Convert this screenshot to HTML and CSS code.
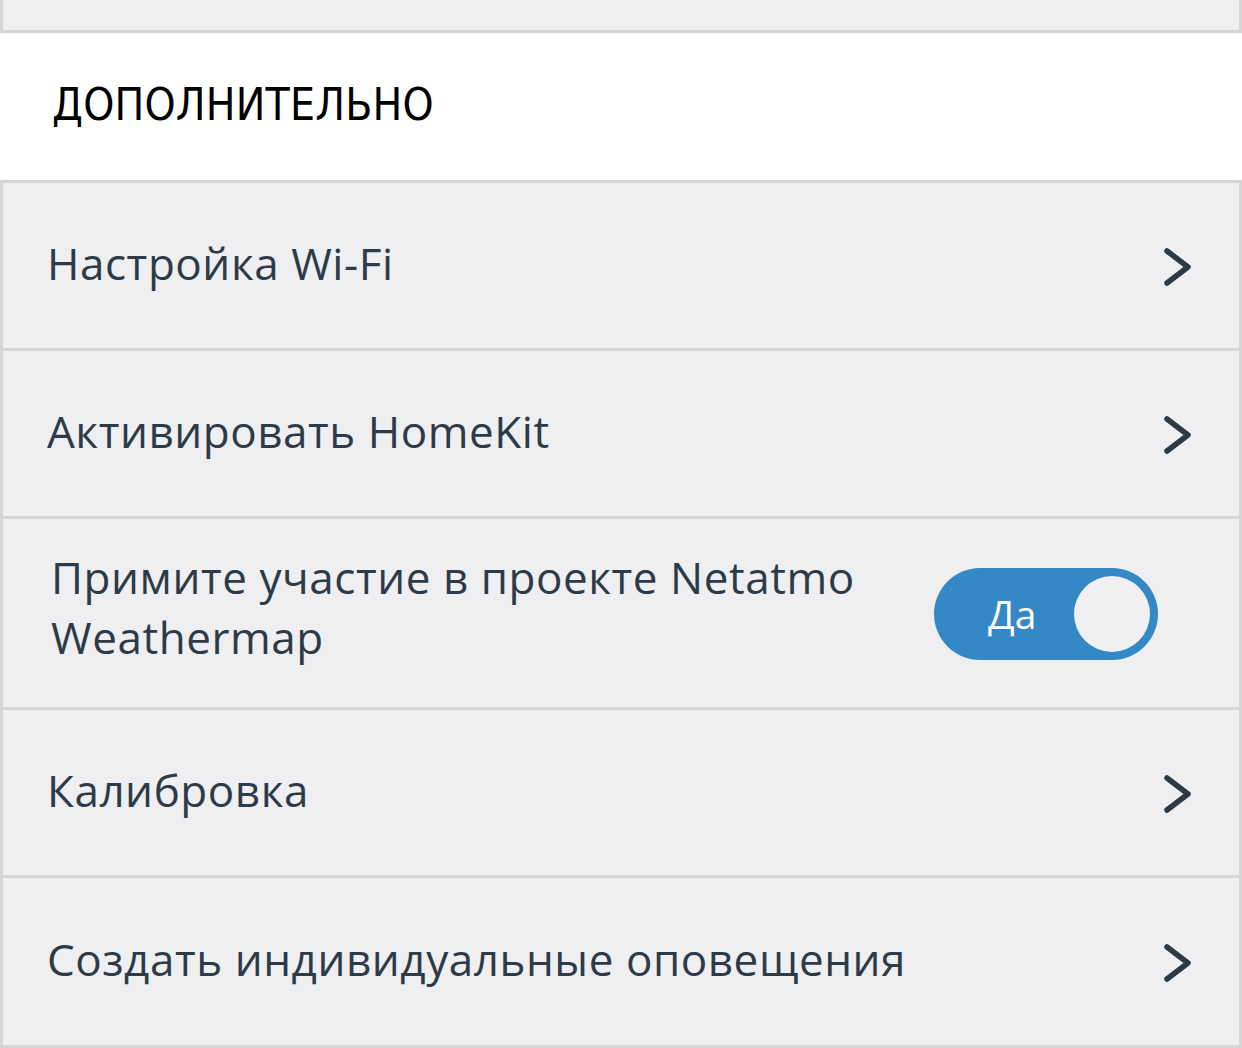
FILE: index.html
```html
<!DOCTYPE html>
<html lang="ru">
<head>
<meta charset="utf-8">
<link rel="stylesheet" href="styles.css">
</head>
<body>
<div class="top-card"></div>
<div class="section-head">ДОПОЛНИТЕЛЬНО</div>
<div class="list">
  <div class="row">
    <span class="label">Настройка Wi-Fi</span>
    <svg class="chev" viewBox="0 0 30 40"><path d="M4 4 L25 20 L4 36"/></svg>
  </div>
  <div class="row">
    <span class="label">Активировать HomeKit</span>
    <svg class="chev" viewBox="0 0 30 40"><path d="M4 4 L25 20 L4 36"/></svg>
  </div>
  <div class="row row-tall">
    <span class="label label-wrap">Примите участие в проекте Netatmo Weathermap</span>
    <div class="toggle"><span class="toggle-text">Да</span><span class="knob"></span></div>
  </div>
  <div class="row">
    <span class="label">Калибровка</span>
    <svg class="chev" viewBox="0 0 30 40"><path d="M4 4 L25 20 L4 36"/></svg>
  </div>
  <div class="row row-last">
    <span class="label">Создать индивидуальные оповещения</span>
    <svg class="chev" viewBox="0 0 30 40"><path d="M4 4 L25 20 L4 36"/></svg>
  </div>
</div>
</body>
</html>
```
FILE: styles.css
```css
html, body {
  margin: 0;
  padding: 0;
  background: #ffffff;
}
body {
  width: 1242px;
  height: 1048px;
  overflow: hidden;
  font-family: "Open Sans", "Noto Sans", sans-serif;
}
.top-card {
  height: 30px;
  background: #efeff2;
  border: 3px solid #d5d5d8;
  border-top: none;
}
.section-head {
  height: 147px;
  display: flex;
  align-items: center;
  padding-left: 52px;
  font-family: "DejaVu Sans Condensed", "DejaVu Sans", sans-serif;
  font-stretch: condensed;
  font-size: 44px;
  color: #000;
  letter-spacing: 0.2px;
  padding-bottom: 4px;
  box-sizing: border-box;
}
.list {
  border-left: 3px solid #d5d5d8;
  border-right: 3px solid #d5d5d8;
}
.row {
  height: 168px;
  box-sizing: border-box;
  border-top: 3px solid #d5d5d8;
  background: #efeff2;
  display: flex;
  align-items: center;
  justify-content: space-between;
  padding: 0 46px 0 44px;
  color: #2d3b48;
}
.row-tall {
  height: 191px;
  padding-left: 48px;
  padding-right: 81px;
}
.row-last {
  height: 173px;
  border-bottom: 3px solid #d5d5d8;
}
.label {
  font-size: 44px;
  line-height: 60px;
  letter-spacing: 0.55px;
  margin-top: -6px;
}
.label-wrap {
  width: 840px;
  margin-top: -12px;
}
.chev {
  width: 30px;
  height: 42px;
  margin-top: 3px;
  fill: none;
  stroke: #2d3a46;
  stroke-width: 5.5;
  stroke-linecap: round;
  stroke-linejoin: round;
}
.toggle {
  width: 224px;
  height: 92px;
  border-radius: 46px;
  background: #3388c5;
  display: flex;
  align-items: center;
  justify-content: space-between;
  padding: 0 8px 0 54px;
  box-sizing: border-box;
  margin-top: 2px;
}
.toggle-text {
  color: #ffffff;
  font-size: 39px;
  margin-top: -2px;
}
.knob {
  width: 76px;
  height: 76px;
  border-radius: 50%;
  background: #f0f0f3;
}
```
